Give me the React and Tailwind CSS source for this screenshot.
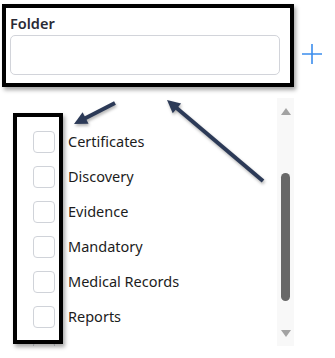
const folders = [
  "Certificates",
  "Discovery",
  "Evidence",
  "Mandatory",
  "Medical Records",
  "Reports",
];

function Arrow({ x1, y1, x2, y2 }) {
  // line from tail (x1,y1) to head (x2,y2)
  const dx = x2 - x1;
  const dy = y2 - y1;
  const len = Math.sqrt(dx * dx + dy * dy);
  const ux = dx / len;
  const uy = dy / len;
  const hl = 13;
  const hw = 6.5;
  const bx = x2 - ux * hl;
  const by = y2 - uy * hl;
  const p1 = `${bx - uy * hw},${by + ux * hw}`;
  const p2 = `${bx + uy * hw},${by - ux * hw}`;
  return (
    <g>
      <line
        x1={x1}
        y1={y1}
        x2={bx + ux * 2}
        y2={by + uy * 2}
        stroke="#2c3a57"
        strokeWidth="4"
      />
      <polygon points={`${x2},${y2} ${p1} ${p2}`} fill="#2c3a57" />
    </g>
  );
}

export default function App() {
  return (
    <div
      className="relative w-[335px] h-[358px] bg-white overflow-hidden"
      style={{ fontFamily: '"Noto Sans", "Open Sans", sans-serif' }}
    >
      {/* folder field */}
      <div className="flex items-end pt-[13px] pl-[10px]">
        <div className="w-[270px]">
          <label className="block text-[14.5px] leading-[20px] font-semibold text-[#2a2a35] mb-[2px]">
            Folder
          </label>
          <input
            type="text"
            className="block w-full h-[40px] border border-[#d2d4da] rounded-[5px] px-2 outline-none"
          />
        </div>
        <button className="ml-[21px] mb-[10px] w-[22px] h-[22px] flex items-center justify-center">
          <svg width="22" height="22" viewBox="0 0 22 22">
            <path d="M11 1v20M1 11h20" stroke="#3b8ded" strokeWidth="1.6" fill="none" />
          </svg>
        </button>
      </div>

      {/* folder list */}
      <div className="flex mt-[23px] h-[248px]">
        <div className="flex-1 pl-[33px] pt-[26px] overflow-hidden">
          {folders.map((name) => (
            <label key={name} className="flex items-center h-[35px] gap-[13px]">
              <span className="w-[22px] h-[22px] border border-[#d0d3d9] rounded-[4px] bg-white shrink-0" />
              <span className="text-[14.5px] text-[#1c1c1c] leading-none">{name}</span>
            </label>
          ))}
          <div className="flex items-center h-[35px]">
            <span className="w-[22px] h-[22px] border border-[#d0d3d9] rounded-[4px] bg-white shrink-0" />
          </div>
        </div>
        <div className="w-[17px] mr-[41px] bg-[#f8f8f8] flex flex-col items-center">
          <svg width="10" height="7" viewBox="0 0 10 7" className="mt-[10px]">
            <polygon points="5,0 10,7 0,7" fill="#a3a3a3" />
          </svg>
          <div className="w-[9px] h-[128px] mt-[58px] rounded-full bg-[#686868]" />
          <svg width="10" height="7" viewBox="0 0 10 7" className="mt-[29px]">
            <polygon points="0,0 10,0 5,7" fill="#a3a3a3" />
          </svg>
        </div>
      </div>

      {/* annotation boxes */}
      <div className="absolute left-[2px] top-[4px] w-[292px] h-[83px] border-[4px] border-black shadow-[2px_3px_4px_rgba(0,0,0,0.35)] pointer-events-none" />
      <div className="absolute left-[13px] top-[113px] w-[50px] h-[231px] border-[4px] border-black shadow-[2px_3px_4px_rgba(0,0,0,0.35)] pointer-events-none" />

      {/* annotation arrows */}
      <svg
        className="absolute left-0 top-0 pointer-events-none"
        width="335"
        height="358"
        style={{ filter: "drop-shadow(1px 2px 1.5px rgba(0,0,0,0.3))" }}
      >
        <Arrow x1={115} y1={103} x2={74} y2={124} />
        <Arrow x1={263} y1={181} x2={167} y2={100} />
      </svg>
    </div>
  );
}
